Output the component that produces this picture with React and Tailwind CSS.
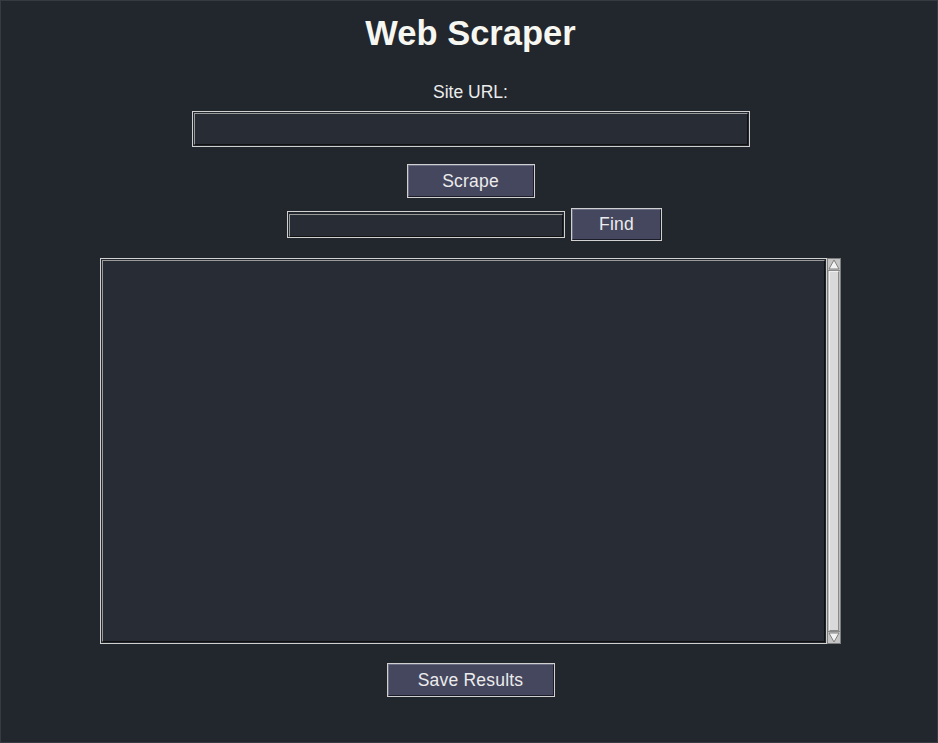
import { Component } from "react";

const font = { fontFamily: '"Liberation Sans", Arial, sans-serif' };

class App extends Component {
    state = { url: "", query: "" }

    render() {
        return (
            <div style={font} className="w-[938px] h-[743px] bg-[#22262d] border border-[#363a41] pl-[3px] flex flex-col items-center text-[#f2f2f2] overflow-hidden">

                <h1 className="mt-[11px] h-[42px] leading-[42px] text-[34.5px] font-bold text-[#f7f7f2]">
                    Web Scraper
                </h1>

                <label className="mt-[28px] h-[20px] leading-[20px] text-[17.5px] text-[#ececec]">
                    Site URL:
                </label>

                {/* url entry */}
                <div className="mt-[9px] w-[558px] h-[36px] border border-[#d0d0d0] p-px">
                    <input
                        value={this.state.url}
                        onChange={e => this.setState({ url: e.target.value })}
                        className="w-full h-full bg-[#282c34] border border-t-[#9a9a9a] border-l-[#9a9a9a] border-b-[#111] border-r-[#111] outline-none text-[#eee] px-1 text-[15px]"
                    />
                </div>

                <button className="mt-[17px] w-[128px] h-[34px] border border-[#d0d0d0] bg-[#45475e] p-0">
                    <span className="flex items-center justify-center w-full h-full border border-t-[#6a6c82] border-l-[#6a6c82] border-b-[#1c1c28] border-r-[#1c1c28] text-[17.5px] tracking-[0.2px] text-[#ececec] pt-px">
                        Scrape
                    </span>
                </button>

                <div className="mt-[10px] flex items-center gap-[6px] ml-[8px]">
                    <div className="w-[278px] h-[27px] border border-[#d0d0d0] p-px">
                        <input
                            value={this.state.query}
                            onChange={e => this.setState({ query: e.target.value })}
                            className="w-full h-full bg-[#282c34] border border-t-[#9a9a9a] border-l-[#9a9a9a] border-b-[#111] border-r-[#111] outline-none text-[#eee] px-1 text-[14px]"
                        />
                    </div>
                    <button className="w-[91px] h-[33px] border border-[#d0d0d0] bg-[#45475e] p-0">
                        <span className="flex items-center justify-center w-full h-full border border-t-[#6a6c82] border-l-[#6a6c82] border-b-[#1c1c28] border-r-[#1c1c28] text-[17.5px] tracking-[0.2px] text-[#ececec]">
                            Find
                        </span>
                    </button>
                </div>

                {/* results box + scrollbar */}
                <div className="mt-[17px] flex w-[741px] h-[386px]">
                    <div className="flex-1 h-full border border-[#d0d0d0] p-px">
                        <textarea
                            readOnly
                            className="w-full h-full bg-[#282c34] border border-t-[#9a9a9a] border-l-[#9a9a9a] border-b-[#111] border-r-[#111] outline-none resize-none block"
                        />
                    </div>
                    <div className="w-[14px] h-full bg-[#bdbdbd] border border-[#7e7e7e] flex flex-col">
                        <div className="h-[12px] flex items-center justify-center bg-[#c4c4c4] border-b border-[#8a8a8a]">
                            <svg width="12" height="11" viewBox="0 0 12 11">
                                <polygon points="6,1 11,10 1,10" fill="#f2f2f2" stroke="#808080" strokeWidth="1" />
                            </svg>
                        </div>
                        <div className="flex-1 mx-px bg-[#d9d9d9] border border-t-[#f0f0f0] border-l-[#f0f0f0] border-b-[#8a8a8a] border-r-[#8a8a8a]" />
                        <div className="h-[12px] flex items-center justify-center bg-[#c4c4c4] border-t border-[#8a8a8a]">
                            <svg width="12" height="11" viewBox="0 0 12 11">
                                <polygon points="1,1 11,1 6,10" fill="#f2f2f2" stroke="#808080" strokeWidth="1" />
                            </svg>
                        </div>
                    </div>
                </div>

                <button className="mt-[19px] w-[168px] h-[34px] border border-[#d0d0d0] bg-[#45475e] p-0">
                    <span className="flex items-center justify-center w-full h-full border border-t-[#6a6c82] border-l-[#6a6c82] border-b-[#1c1c28] border-r-[#1c1c28] text-[17.5px] tracking-[0.2px] text-[#ececec] pt-px">
                        Save Results
                    </span>
                </button>

            </div>
        )
    }
};

export default App;
